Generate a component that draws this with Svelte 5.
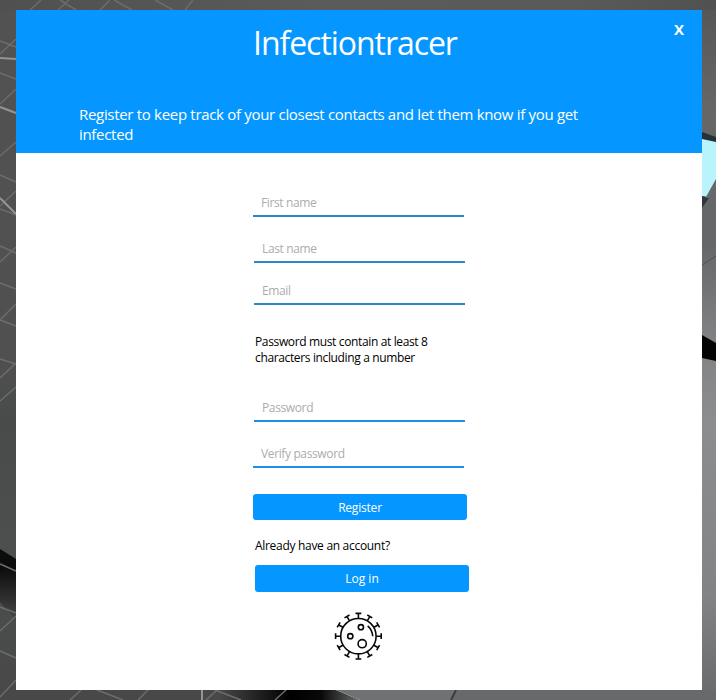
<script>
  const first = [
    { id: 'first', label: 'First name', type: 'text' },
    { id: 'last', label: 'Last name', type: 'text' },
    { id: 'email', label: 'Email', type: 'text' }
  ];
  const second = [
    { id: 'password', label: 'Password', type: 'password' },
    { id: 'verify', label: 'Verify password', type: 'password' }
  ];
  const spikes = Array.from({ length: 12 }, (_, i) => i * 30);
</script>

<div class="desktop">
  <svg class="backdrop" width="716" height="700" viewBox="0 0 716 700" aria-hidden="true">
    <defs>
      <linearGradient id="left" x1="0" y1="0" x2="0" y2="1">
        <stop offset="0" stop-color="#525252" />
        <stop offset=".5" stop-color="#505050" />
        <stop offset=".6" stop-color="#494b4a" />
        <stop offset=".78" stop-color="#4c4f4e" />
        <stop offset="1" stop-color="#484848" />
      </linearGradient>
      <linearGradient id="right" x1="0" y1="0" x2="0" y2="1">
        <stop offset="0" stop-color="#555556" />
        <stop offset=".15" stop-color="#666667" />
        <stop offset=".35" stop-color="#666768" />
        <stop offset=".48" stop-color="#808182" />
        <stop offset=".6" stop-color="#8b8d8f" />
        <stop offset=".85" stop-color="#818385" />
        <stop offset="1" stop-color="#68696b" />
      </linearGradient>
      <linearGradient id="top"><stop offset="0" stop-color="#505050" /><stop offset=".45" stop-color="#5b5b5b" /><stop offset=".8" stop-color="#5a5a5a" /><stop offset="1" stop-color="#515151" /></linearGradient>
      <linearGradient id="shade"><stop offset="0" stop-color="#484848" /><stop offset=".5" stop-color="#000" /><stop offset=".72" stop-color="#080808" /><stop offset="1" stop-color="#6a6b6c" /></linearGradient>
      <linearGradient id="fade" x1="0" y1="0" x2="0" y2="1"><stop offset="0" stop-color="#050505" /><stop offset="1" stop-color="#484848" /></linearGradient>
    </defs>
    <rect width="16" height="700" fill="url(#left)" />
    <rect x="702" width="14" height="700" fill="url(#right)" />
    <rect width="716" height="10" fill="url(#top)" />
    <rect y="690" width="220" height="10" fill="#484848" />
    <path d="M220 690h116l24 10H220z" fill="url(#shade)" />
    <path d="M336 690h120l-5 10h-91z" fill="#707173" />
    <path d="M456 690h260v10H451z" fill="#68696b" />
    <path d="M456 690l-5 10" stroke="#3d3d3f" stroke-width="2" />
    <path d="M0 562l16 10v48L0 602z" fill="url(#fade)" />
    <path d="M0 549l16 10v13L0 562z" fill="#0b0c0b" />
    <g class="soft" fill="none" stroke="#6c6c6c" stroke-width="1.5">
      <path d="M30 10L41 0M58 10L69 0M76 10L60 0M100 10L110 0M132 10L114 0M155 0l18 10M185 10l8-10" />
      <path d="M0 54L16 39M0 41l16 6M0 73l16 6M0 104l16-15M0 156l16-14M0 175l16 7M0 206l16-15M0 209l16 6M0 246l16 7M0 262l16-15M0 283l16 6M0 320l16-16M0 320l16 6M0 359l16 5M0 378l16-15M0 401l16-14M0 564l16 7M0 631l16-15M0 607l16 6M0 651l16 7M0 697l16-17M70 700l11-10M97 690l26 10M138 700l10-10M206 700l11-10M215 690l26 10M275 700l11-10" />
    </g>
    <path class="soft" d="M0 58l16 1M0 107l16 6M0 198l16 16M202 690v10" stroke="#949494" stroke-width="2" fill="none" />
    <path d="M702 132l14 5v55l-14 12z" fill="#253139" />
    <path d="M702 139l14 3v38l-8 17-6-1z" fill="#b9f4fc" />
    <path d="M702 204l14-25v20l-14 12z" fill="#65696b" />
    <path d="M702 198h7l-7 10z" fill="#343638" />
    <path d="M702 265l14-9" stroke="#505152" fill="none" />
    <path class="soft" d="M702 335l14 8v18l-14-3z" fill="#050505" />
  </svg>

  <main class="card">
    <header>
      <div class="bar"><h1>Infectiontracer</h1><button class="close" aria-label="Close">X</button></div>
      <p>Register to keep track of your closest contacts and let them know if you get<br />infected</p>
    </header>
    <form onsubmit={(e) => e.preventDefault()}>
      {#each first as f}
        <input class={f.id} type={f.type} placeholder={f.label} aria-label={f.label} />
      {/each}
      <p class="hint">Password must contain at least 8<br />characters including a number</p>
      {#each second as f}
        <input class={f.id} type={f.type} placeholder={f.label} aria-label={f.label} />
      {/each}
      <button class="action register">Register</button>
      <p class="question">Already have an account?</p>
      <button class="action login" type="button">Log in</button>
      <svg class="virus" width="50" height="50" viewBox="-25.4 -25.2 50 50" aria-hidden="true">
        <g fill="none" stroke="#080808" stroke-width="1.6">
          <circle r="17.7" />
          {#each spikes as angle}
            <path d="M0-18v-5M-2.9-22.8h5.8" transform="rotate({angle})" />
          {/each}
          <circle cx="2.5" cy="-9" r="2.6" />
          <circle cx="-8.1" cy="0" r="2.6" />
          <circle cx="3.8" cy="7.5" r="4.1" />
          <path d="M9.3-10.3Q14-6 14.3 0" />
        </g>
      </svg>
    </form>
  </main>
</div>

<style>
  :global(body) { margin: 0; }
  .desktop { position: relative; box-sizing: border-box; width: 716px; height: 700px; padding: 10px 14px 10px 16px; overflow: hidden; font-family: "Open Sans", "Noto Sans", sans-serif; }
  .backdrop { position: absolute; inset: 0; }
  .soft { filter: blur(.5px); }
  .card { position: relative; height: 680px; background: #fff; }
  header { height: 143px; background: #0597ff; color: #fff; }
  .bar { display: flex; align-items: flex-start; height: 94px; }
  h1 { width: 240px; margin: 11px 0 0 237px; font-size: 32px; line-height: 44px; font-weight: 400; letter-spacing: -1.05px; white-space: nowrap; }
  .close { margin: 8px 18px 0 auto; padding: 0; border: 0; background: none; color: #fff; font: 700 15px/22px "Open Sans", sans-serif; }
  header p { margin: 0 0 0 63px; font-size: 15px; line-height: 20px; letter-spacing: -.31px; white-space: nowrap; }
  form { display: flex; flex-direction: column; align-items: flex-start; padding-left: 237px; font-size: 12px; }
  input { box-sizing: border-box; width: 211px; height: 28px; padding: 0 8px; border: 0; border-bottom: 2px solid #2889c9; outline: 0; background: none; font: 12px "Open Sans", sans-serif; letter-spacing: -.37px; }
  input::placeholder { color: #acacac; opacity: 1; }
  .first { margin-top: 36px; }
  .last { margin: 18px 0 0 1px; }
  .email { margin: 14px 0 0 1px; }
  .hint { margin: 29px 0 0 2px; line-height: 16px; letter-spacing: -.36px; color: #000; white-space: nowrap; }
  .password { margin: 28px 0 0 1px; border-color: #1c91e4; }
  .verify { margin-top: 18px; border-color: #1c91e4; }
  .action { width: 214px; height: 27px; padding: 0; border: 0; border-radius: 3px; background: #0597ff; color: #fff; font: 12px/27px "Open Sans", sans-serif; letter-spacing: -.2px; }
  .register { height: 26.5px; margin-top: 25.5px; }
  .question { margin: 18px 0 0 2px; line-height: 16px; letter-spacing: -.3px; color: #000; }
  .login { margin: 11px 0 0 2px; letter-spacing: 0; }
  .virus { margin: 19px 0 0 80px; }
</style>
